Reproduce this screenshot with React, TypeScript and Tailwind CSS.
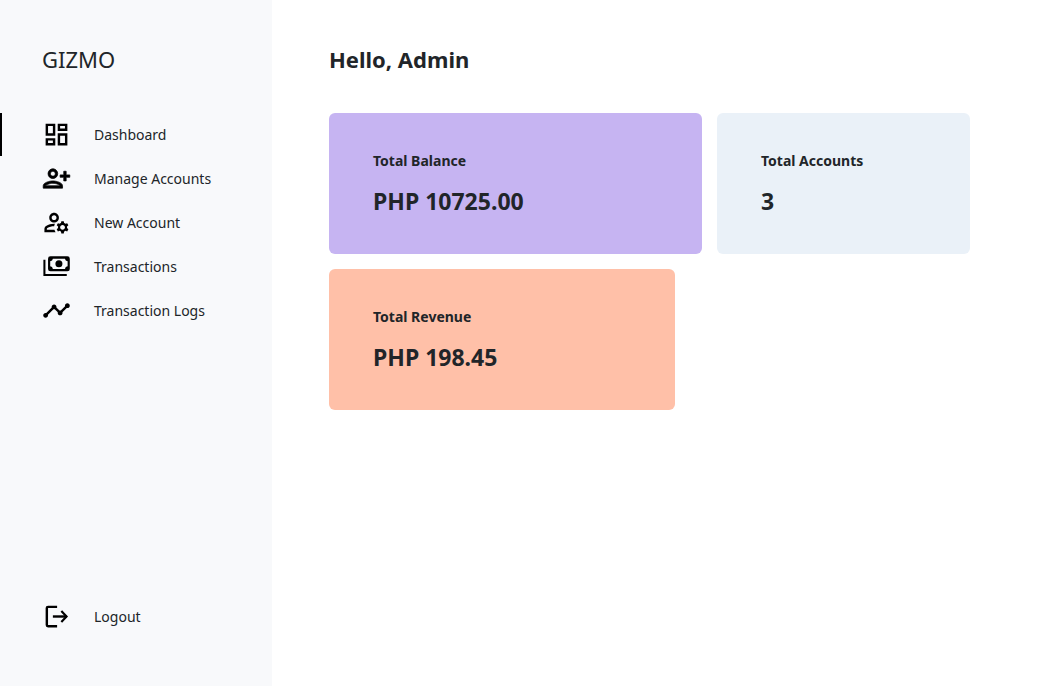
import { MdOutlineDashboard, MdOutlineManageAccounts, MdTimeline } from "react-icons/md";
import type { ReactNode } from "react";

function PersonAddIcon() {
  return (
    <svg viewBox="0 0 24 24" className="size-[29px]" fill="currentColor" stroke="currentColor" strokeWidth="0.6">
      <path d="M13 8c0-2.210-1.790-4-4-4S5 5.790 5 8s1.790 4 4 4 4-1.790 4-4zm-2 0c0 1.100-.9 2-2 2s-2-.9-2-2 .9-2 2-2 2 .9 2 2zM1 18v2h16v-2c0-2.660-5.330-4-8-4s-8 1.340-8 4zm2 0c.2-.71 3.300-2 6-2 2.690 0 5.770 1.280 6 2H3zM20 14v-3h3V9h-3V6h-2v3h-3v2h3v3h2z" />
    </svg>
  );
}

function CashIcon() {
  return (
    <svg viewBox="0 0 24 24" className="size-[29px]" fill="none" stroke="currentColor" strokeWidth="2">
      <path d="M2 6.500v12.500h18.500" strokeWidth="1.700" />
      <path
        fill="currentColor"
        stroke="none"
        fillRule="evenodd"
        d="M7 3.500h14a2 2 0 0 1 2 2v8.500a2 2 0 0 1-2 2H7a2 2 0 0 1-2-2V5.500a2 2 0 0 1 2-2zM9 5.500a2.500 2.500 0 0 1-2.200 2.200v4.100A2.500 2.500 0 0 1 9 14h10a2.500 2.500 0 0 1 2.200-2.200V7.700A2.500 2.500 0 0 1 19 5.500z"
      />
      <circle cx="14" cy="9.750" r="2.900" fill="currentColor" stroke="none" />
    </svg>
  );
}

function LogoutIcon() {
  return (
    <svg viewBox="0 0 24 24" className="size-[29px]" fill="none" stroke="currentColor" strokeWidth="2">
      <path d="M12.500 4H5a1 1 0 0 0-1 1v14a1 1 0 0 0 1 1h7.500" />
      <path d="M9 12h11.500" />
      <path d="M16 7.500 20.300 12 16 16.500" strokeWidth="1.800" />
    </svg>
  );
}

type Item = { label: string; icon: ReactNode; active?: boolean };

const items: Item[] = [
  { label: "Dashboard", icon: <MdOutlineDashboard size={29} />, active: true },
  { label: "Manage Accounts", icon: <PersonAddIcon /> },
  { label: "New Account", icon: <MdOutlineManageAccounts size={29} /> },
  { label: "Transactions", icon: <CashIcon /> },
  { label: "Transaction Logs", icon: <MdTimeline size={29} /> },
];

function NavItem({ label, icon, active }: Item) {
  return (
    <button
      type="button"
      className={`flex h-[43px] w-full items-center gap-[23px] border-l-2 pl-10 text-left text-sm ${
        active ? "border-black" : "border-transparent"
      }`}
    >
      <span className="text-black">{icon}</span>
      {label}
    </button>
  );
}

function Card({ title, value, className }: { title: string; value: string; className: string }) {
  return (
    <section className={`h-[141px] rounded-md px-11 pt-9 font-bold ${className}`}>
      <h2 className="text-sm leading-6">{title}</h2>
      <p className="mt-3 text-[23px] leading-8">{value}</p>
    </section>
  );
}

export default function App() {
  return (
    <div className="flex min-h-screen bg-white font-['Noto_Sans',sans-serif] text-[#212529]">
      <aside className="flex w-[272px] shrink-0 flex-col bg-[#f8f9fb] pt-[43px] pb-12">
        <div className="px-[42px] text-[22px] leading-8">GIZMO</div>
        <nav className="mt-[38px] flex flex-col gap-px">
          {items.map((item) => (
            <NavItem key={item.label} {...item} />
          ))}
        </nav>
        <div className="mt-auto">
          <NavItem label="Logout" icon={<LogoutIcon />} />
        </div>
      </aside>
      <main className="min-w-0 flex-1 pt-[43px] pr-[88px] pl-[57px]">
        <h1 className="text-[22px] leading-8 font-bold">Hello, Admin</h1>
        <div className="mt-[38px] flex gap-[15px]">
          <Card title="Total Balance" value="PHP 10725.00" className="w-[373px] bg-[#c6b4f2]" />
          <Card title="Total Accounts" value="3" className="flex-1 bg-[#eaf1f8]" />
        </div>
        <div className="mt-[15px] flex">
          <Card title="Total Revenue" value="PHP 198.45" className="w-[346px] bg-[#ffc0a8]" />
        </div>
      </main>
    </div>
  );
}
